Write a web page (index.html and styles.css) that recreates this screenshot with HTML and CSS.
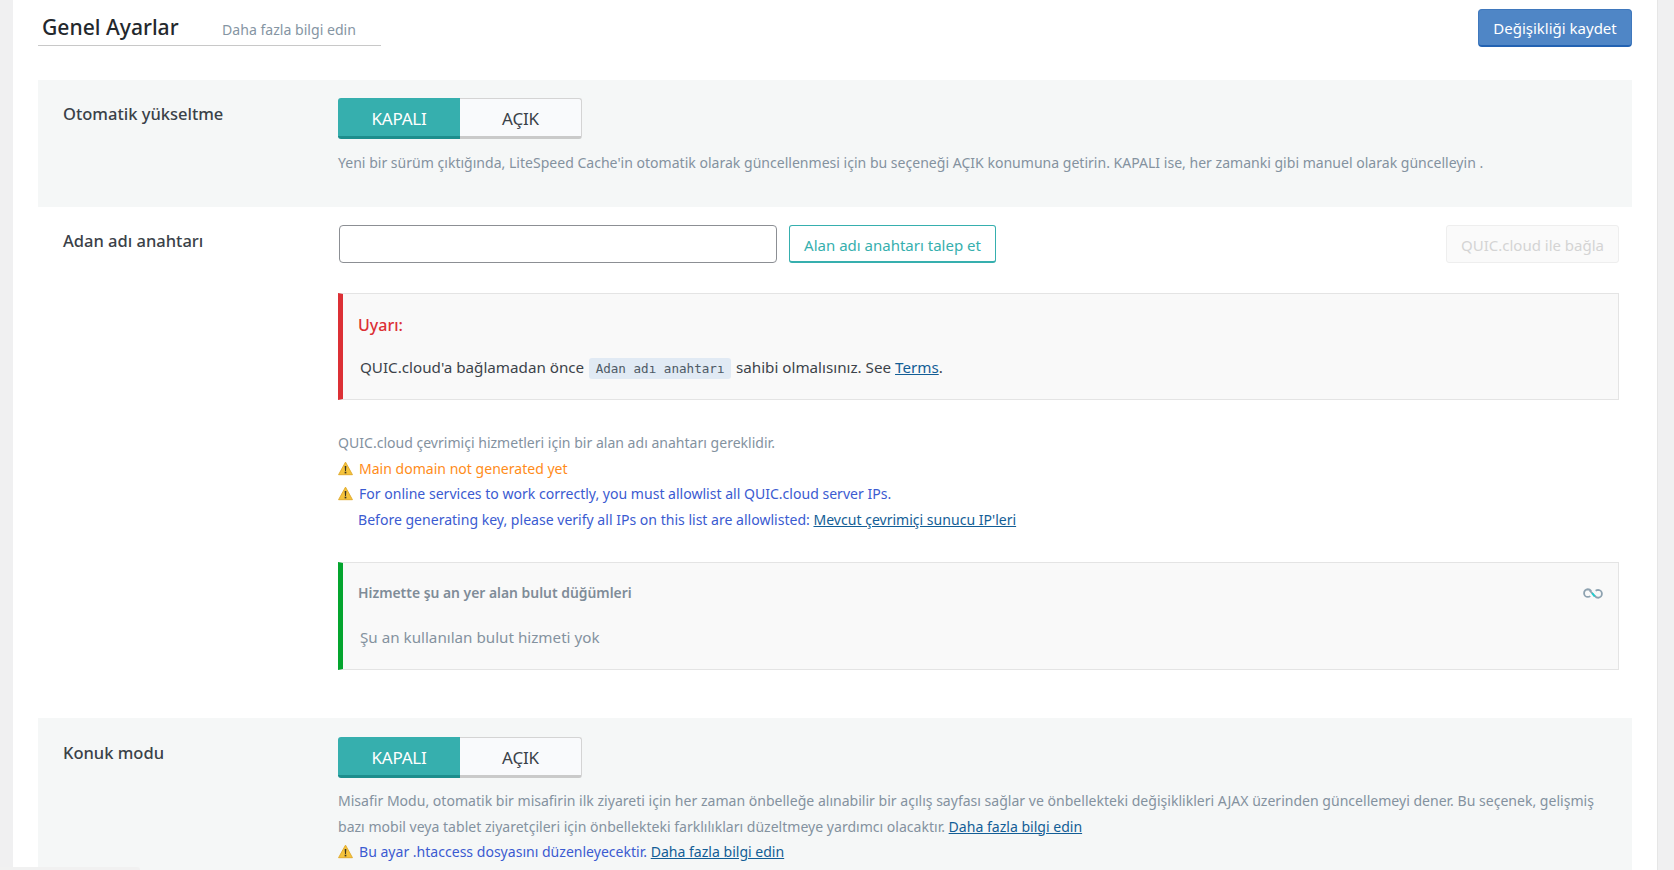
FILE: index.html
```html
<!DOCTYPE html>
<html lang="tr">
<head>
  <meta charset="UTF-8" />
  <title>Genel Ayarlar</title>
  <link rel="stylesheet" href="styles.css">
</head>
<body>
  <svg class="defs" width="0" height="0">
    <symbol id="warn" viewBox="0 0 16 16">
      <path d="M8 1.2 15.4 14.6H.6z" fill="#f5c33b" stroke="#e0a92a" stroke-width="1" stroke-linejoin="round"/>
      <path d="M7.1 5.2h1.8l-.4 5.4h-1z" fill="#3a3320"/>
      <rect x="7.1" y="11.4" width="1.8" height="1.8" fill="#3a3320"/>
    </symbol>
  </svg>

  <div class="panel">
    <header class="top">
      <div class="title-tab">
        <h1>Genel Ayarlar</h1>
        <a class="title-more" href="#">Daha fazla bilgi edin</a>
      </div>
      <button class="btn-save">Değişikliği kaydet</button>
    </header>

    <section class="row shaded">
      <div class="label">Otomatik yükseltme</div>
      <div class="field">
        <div class="toggle">
          <span class="toggle-off">KAPALI</span>
          <span class="toggle-on">AÇIK</span>
        </div>
        <p class="desc">Yeni bir sürüm çıktığında, LiteSpeed Cache'in otomatik olarak güncellenmesi için bu seçeneği AÇIK konumuna getirin. KAPALI ise, her zamanki gibi manuel olarak güncelleyin .</p>
      </div>
    </section>

    <section class="row plain">
      <div class="label">Adan adı anahtarı</div>
      <div class="field">
        <div class="key-line">
          <input class="key-input" type="text" />
          <button class="btn-outline">Alan adı anahtarı talep et</button>
          <button class="btn-disabled">QUIC.cloud ile bağla</button>
        </div>

        <div class="box box-red">
          <h4 class="box-warn-title">Uyarı:</h4>
          <p class="box-text">QUIC.cloud'a bağlamadan önce <code>Adan adı anahtarı</code> sahibi olmalısınız. See <a href="#">Terms</a>.</p>
        </div>

        <div class="desc key-desc">
          <div>QUIC.cloud çevrimiçi hizmetleri için bir alan adı anahtarı gereklidir.</div>
          <div class="orange"><svg class="warn-icon"><use href="#warn"/></svg>Main domain not generated yet</div>
          <div class="blue"><svg class="warn-icon"><use href="#warn"/></svg>For online services to work correctly, you must allowlist all QUIC.cloud server IPs.</div>
          <div class="blue indent">Before generating key, please verify all IPs on this list are allowlisted: <a href="#">Mevcut çevrimiçi sunucu IP'leri</a></div>
        </div>

        <div class="box box-green">
          <div class="box-head">
            <h4 class="nodes-title">Hizmette şu an yer alan bulut düğümleri</h4>
            <svg class="link-icon" viewBox="0 0 22 12" fill="none">
              <path d="M9 3.4C8 2 6.8 1.300 5.300 1.300A4.200 4.200 0 0 0 1.200 5.600c0 2.400 1.900 4.200 4.200 4.200 1 0 1.800-.3 2.600-.9M13 8.600c1 1.400 2.300 2.100 3.800 2.100a4.300 4.300 0 0 0 4-4.400 4.200 4.200 0 0 0-4.100-4.200c-1.100 0-2 .3-2.800.9" stroke="#8ea2b0" stroke-width="2"/>
              <path d="M7.500 2.800 13.500 9.300" stroke="#8ea2b0" stroke-width="2"/>
              <path d="M10 5.600 12.800 9.200" stroke="#1fd0d0" stroke-width="2"/>
            </svg>
          </div>
          <p class="box-text muted">Şu an kullanılan bulut hizmeti yok</p>
        </div>
      </div>
    </section>

    <section class="row shaded last">
      <div class="label">Konuk modu</div>
      <div class="field">
        <div class="toggle">
          <span class="toggle-off">KAPALI</span>
          <span class="toggle-on">AÇIK</span>
        </div>
        <div class="desc guest-desc">
          <div>Misafir Modu, otomatik bir misafirin ilk ziyareti için her zaman önbelleğe alınabilir bir açılış sayfası sağlar ve önbellekteki değişiklikleri AJAX üzerinden güncellemeyi dener. Bu seçenek, gelişmiş</div>
          <div>bazı mobil veya tablet ziyaretçileri için önbellekteki farklılıkları düzeltmeye yardımcı olacaktır. <a href="#">Daha fazla bilgi edin</a></div>
          <div class="blue"><svg class="warn-icon"><use href="#warn"/></svg>Bu ayar .htaccess dosyasını düzenleyecektir. <a href="#">Daha fazla bilgi edin</a></div>
        </div>
      </div>
    </section>
  </div>

  <div class="status-bubble"></div>
</body>
</html>
```

FILE: styles.css
```css
html, body {
  height: 100%;
  overflow: hidden;
}

body {
  margin: 0;
  background-color: #f0f0f1;
  color: #3c434a;
  font-family: "Noto Sans", "Open Sans", sans-serif;
  font-size: 14px;
}

.defs {
  position: absolute;
}

.panel {
  margin-left: 13px;
  width: 1645px;
  height: 100%;
  padding: 0 25px;
  box-sizing: border-box;
  background-color: white;
  border-right: 1px solid #e6e6e6;
}

.top {
  display: flex;
  justify-content: space-between;
  align-items: flex-start;
  height: 80px;
}

.title-tab {
  display: flex;
  align-items: baseline;
  width: 343px;
  height: 46px;
  padding-left: 4px;
  box-sizing: border-box;
  border-bottom: 1px solid #c8c8c8;
}

.title-tab h1 {
  margin: 0;
  padding-top: 12px;
  width: 180px;
  font-size: 21.100px;
  font-weight: 500;
  line-height: 30px;
  color: #23282d;
}

.title-more {
  color: #8595a3;
  font-size: 14.100px;
  text-decoration: none;
}

.btn-save {
  margin-top: 9px;
  width: 154px;
  height: 38px;
  padding: 0;
  background-color: #4f86c6;
  border: 1px solid #3f78bd;
  border-bottom: 2px solid #2262b2;
  border-radius: 4px;
  color: white;
  font-family: inherit;
  font-size: 15px;
}

.row {
  display: flex;
  padding: 18px 13px 0 25px;
}

.shaded {
  background-color: #f5f7f7;
  height: 127px;
  box-sizing: border-box;
}

.plain {
  height: 511px;
  box-sizing: border-box;
}

.last {
  height: 152px;
  padding-top: 19px;
}

.label {
  width: 275px;
  flex-shrink: 0;
  padding-top: 4px;
  font-size: 16.500px;
  font-weight: 500;
  line-height: 24px;
  color: #3a4148;
}

.field {
  flex: 1;
  min-width: 0;
}

.toggle {
  display: flex;
  width: 244px;
  height: 41px;
  border-radius: 3px;
  font-size: 17px;
  letter-spacing: -0.2px;
  line-height: 41px;
  text-align: center;
}

.toggle-off {
  width: 122px;
  background-color: #36afae;
  border-bottom: 3px solid #1d8e8d;
  border-radius: 3px 0 0 3px;
  color: white;
}

.toggle-on {
  flex: 1;
  background-color: #f9fafc;
  border: 1px solid #d4d4d4;
  border-left: 0;
  border-bottom: 3px solid #cacaca;
  border-radius: 0 3px 3px 0;
  line-height: 39px;
  color: #3a4148;
}

.desc {
  margin: 0;
  color: #84929f;
  font-size: 14.050px;
  line-height: 25.600px;
}

.desc a, .box-text a {
  color: #135e96;
}

.shaded > .field > p.desc {
  margin-top: 11px;
}

.key-line {
  display: flex;
  gap: 12px;
  padding-left: 1px;
}

.key-input {
  width: 438px;
  height: 38px;
  padding: 0 8px;
  box-sizing: border-box;
  background-color: white;
  border: 1px solid #8c8f94;
  border-radius: 4px;
}

.btn-outline {
  width: 207px;
  height: 38px;
  padding: 2px 0 0;
  background-color: white;
  border: 1px solid #36afae;
  border-bottom-width: 2px;
  border-radius: 3px;
  color: #36afae;
  font-family: inherit;
  font-size: 15px;
}

.btn-disabled {
  width: 173px;
  height: 38px;
  margin-left: auto;
  padding: 1px 0 0;
  background-color: #fafafa;
  border: 1px solid #eeeeee;
  border-radius: 3px;
  color: #d4d4d4;
  font-family: inherit;
  font-size: 15px;
}

.box {
  box-sizing: border-box;
  height: 107px;
  padding: 0 15px;
  background-color: #f9f9f9;
  border: 1px solid #e4e4e4;
  border-left-width: 5px;
}

.box-red {
  margin-top: 30px;
  border-left-color: #dc3035;
}

.box-green {
  margin-top: 30px;
  height: 108px;
  border-left-color: #04a52e;
}

.box-warn-title {
  margin: 19px 0 0;
  font-size: 16px;
  font-weight: 500;
  line-height: 24px;
  color: #dc3035;
}

.box-text {
  margin: 17px 0 0 2px;
  font-size: 15.200px;
  line-height: 26px;
  color: #3c434a;
}

.box-text code {
  padding: 3px 6.500px;
  margin: 0 1px;
  background-color: #e1eaf4;
  border-radius: 3px;
  font-family: "DejaVu Sans Mono", "Liberation Mono", monospace;
  font-size: 12.600px;
  color: #4e5a66;
}

.box-head {
  display: flex;
  justify-content: space-between;
  align-items: center;
  padding-top: 18px;
}

.nodes-title {
  margin: 0;
  font-size: 13.900px;
  font-weight: 600;
  line-height: 24px;
  color: #7f8c98;
}

.link-icon {
  width: 20px;
  height: 11px;
}

.box-green .box-text {
  margin-top: 19px;
}

.muted {
  color: #84929f !important;
}

.key-desc {
  margin-top: 30px;
}

.guest-desc {
  margin-top: 10px;
}

.orange {
  color: #ff8c1a;
}

.blue {
  color: #3b5bd1;
}

.indent {
  padding-left: 20px;
}

.warn-icon {
  width: 15px;
  height: 15px;
  margin-right: 6px;
  vertical-align: -2px;
}

.status-bubble {
  position: absolute;
  left: 0;
  bottom: 0;
  width: 140px;
  height: 3px;
  background-color: #f1f1f1;
  border-radius: 0 4px 0 0;
}
```
